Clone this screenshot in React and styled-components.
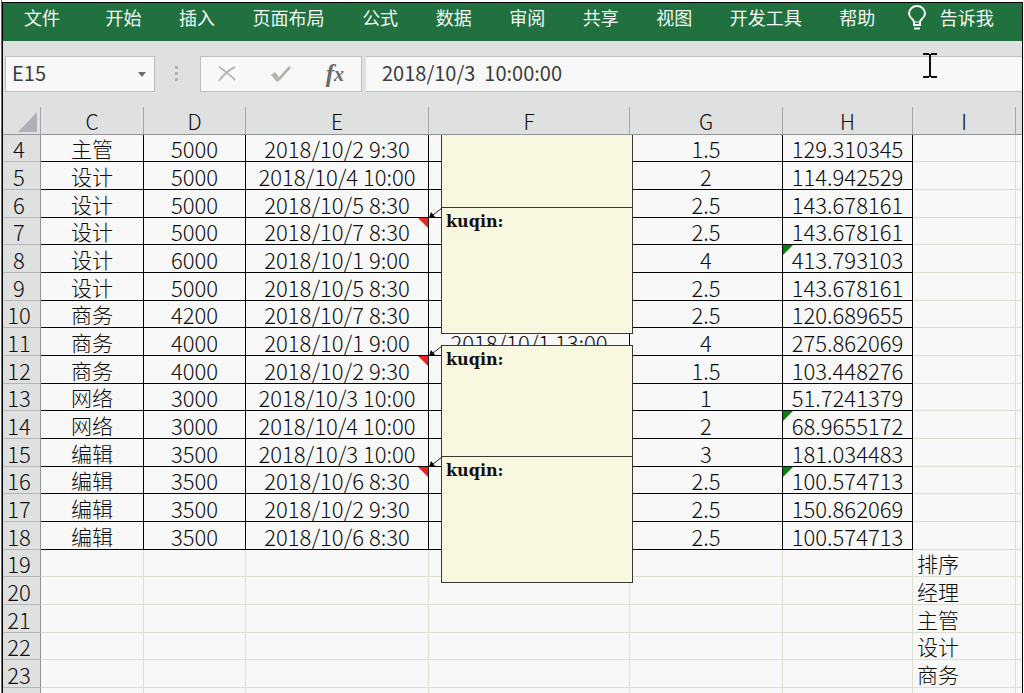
import styled, { createGlobalStyle } from "styled-components";

const GlobalStyle = createGlobalStyle`
    * {
        box-sizing: border-box;
    }
    body {
        margin: 0;
        background-color: #fff;
        font-family: "Noto Sans CJK SC", sans-serif;
    }
    button, input {
        font: inherit;
        color: inherit;
    }
`
const Window = styled.div`
    height: 100vh;
    overflow: hidden;
    padding: 2px 1px 0;
    background: linear-gradient(to right, #fff 1px, #3a78ad 1px, #3a78ad 2px, #fff 2px);
`
const Frame = styled.div`
    display: flex;
    flex-direction: column;
    min-height: 100%;
    margin-left: 1px;
    border: 1px solid #000;
    border-bottom: none;
    background-color: #dfe0e0;
`
const Ribbon = styled.nav`
    display: flex;
    align-items: center;
    justify-content: space-between;
    height: 38px;
    padding: 0 28px 10px 21px;
    background-color: #217140;
    color: #f4f8f4;
`
const Tab = styled.button`
    display: flex;
    align-items: center;
    gap: 14px;
    flex: none;
    padding: 0;
    border: none;
    background: none;
    font-size: 18px;
    line-height: 28px;
    cursor: pointer;

    &:first-child {
        margin-right: 8px;
    }

    &:last-child {
        margin-left: -5px;
    }
`
const FormulaBar = styled.div`
    display: flex;
    align-items: center;
    height: 66px;
    padding-left: 2px;
    color: #3c3c3c;
    font-size: 20px;
`
const NameBox = styled.div`
    display: flex;
    align-items: center;
    width: 150px;
    height: 36px;
    padding: 0 8px 0 6px;
    border: 1px solid #bdbebe;
    background-color: #f8f8f8;

    input {
        flex: 1;
        min-width: 0;
        height: 34px;
        padding: 0 0 4px;
        border: none;
        background: none;
        outline: none;
    }
`
const IconButton = styled.button`
    display: flex;
    align-items: center;
    justify-content: center;
    padding: 0;
    border: none;
    background: none;
    cursor: pointer;
`
const FunctionButton = styled(IconButton)`
    color: #6a6a6a;
    font: italic bold 25px/30px "Liberation Serif", serif;

    small {
        font-size: 20px;
    }
`
const Grip = styled.svg`
    margin: 0 21px 0 20px;
`
const Actions = styled.div`
    display: flex;
    align-items: center;
    justify-content: space-between;
    width: 162px;
    height: 36px;
    padding: 0 17px;
    border: 1px solid #bdbebe;
    background-color: #f8f8f8;
`
const FormulaInput = styled.input`
    flex: 1;
    min-width: 0;
    height: 36px;
    margin-left: 4px;
    padding: 0 16px 4px;
    border: 1px solid #bdbebe;
    border-width: 1px 0;
    background-color: #f8f8f8;
    outline: none;
    white-space: pre;
`
const SheetArea = styled.div`
    position: relative;
    flex: 1;
    background-color: #f8f8f8;
`
const Sheet = styled.table`
    width: 100%;
    table-layout: fixed;
    border-collapse: separate;
    border-spacing: 0;
    color: #0c0c0c;
    font-size: 22px;
    font-weight: 300;
    line-height: 26px;
`
const ColumnHead = styled.th`
    height: 28px;
    padding: 1px 0 0;
    border-right: 1px solid #a4a5a8;
    border-bottom: 1px solid #939496;
    background-color: #dfe0e0;
    font-size: 21px;
    font-weight: 300;

    &:last-child {
        border-right: none;
    }
`
const SelectAll = styled.svg`
    display: block;
    margin: 2px 0 0 15px;
`
const RowHead = styled.th`
    padding: 0 5px 0 0;
    border-right: 1px solid #939496;
    border-bottom: 1px solid #b4b5b8;
    background-color: #dfe0e0;
    font-weight: 300;
`
const Row = styled.tr`
    height: 28px;

    &:nth-child(3n + 1) {
        height: 27px;
    }
`
const Cell = styled.td`
    position: relative;
    padding: ${props => props.$left ? '0 4px' : '0'};
    border-right: 1px solid ${props => props.$boxed ? '#000' : '#dedfd3'};
    border-bottom: 1px solid ${props => props.$boxed ? '#000' : '#dedfd3'};
    font-size: ${props => props.$hanzi ? '21px' : '22px'};
    text-align: ${props => props.$left ? 'left' : 'center'};
    white-space: nowrap;

    &:last-child {
        border-right: none;
    }
`
const NoteMark = styled.span`
    position: absolute;
    top: 0;
    right: 0;
    border-top: 10px solid #e8261f;
    border-left: 10px solid transparent;
`
const ErrorMark = styled.span`
    position: absolute;
    top: 0;
    left: 0;
    border-top: 10px solid #0b7d12;
    border-right: 10px solid transparent;
`
const Note = styled.aside`
    position: absolute;
    top: ${props => props.$top}px;
    left: 438px;
    width: 192px;
    height: 127px;
    padding: 3px 4px;
    border: 1px solid #3a3a34;
    border-top-width: ${props => props.$cut ? '0' : '1px'};
    background-color: #f8f7e0;
    color: #111;
    font: bold 16px/22px "DejaVu Serif", serif;
`
const Arrow = styled.svg`
    position: absolute;
    top: 0;
    left: -13px;
    overflow: visible;
`
const Pointer = styled.svg`
    position: fixed;
    top: 53px;
    left: 923px;
    pointer-events: none;
`

const tabs = ['文件', '开始', '插入', '页面布局', '公式', '数据', '审阅', '共享', '视图', '开发工具', '帮助']

const columns = [
    { name: 'C', width: 103 },
    { name: 'D', width: 102 },
    { name: 'E', width: 183 },
    { name: 'F', width: 201 },
    { name: 'G', width: 153 },
    { name: 'H', width: 130 },
    { name: 'I', width: 103 }
]

const rows = [
    { id: 4, cells: ['主管', '5000', '2018/10/2 9:30', '', '1.5', '129.310345'] },
    { id: 5, cells: ['设计', '5000', '2018/10/4 10:00', '', '2', '114.942529'] },
    { id: 6, cells: ['设计', '5000', '2018/10/5 8:30', '', '2.5', '143.678161'] },
    { id: 7, cells: ['设计', '5000', '2018/10/7 8:30', '', '2.5', '143.678161'], note: true },
    { id: 8, cells: ['设计', '6000', '2018/10/1 9:00', '', '4', '413.793103'], error: true },
    { id: 9, cells: ['设计', '5000', '2018/10/5 8:30', '', '2.5', '143.678161'] },
    { id: 10, cells: ['商务', '4200', '2018/10/7 8:30', '', '2.5', '120.689655'] },
    { id: 11, cells: ['商务', '4000', '2018/10/1 9:00', '2018/10/1 13:00', '4', '275.862069'] },
    { id: 12, cells: ['商务', '4000', '2018/10/2 9:30', '', '1.5', '103.448276'], note: true },
    { id: 13, cells: ['网络', '3000', '2018/10/3 10:00', '', '1', '51.7241379'] },
    { id: 14, cells: ['网络', '3000', '2018/10/4 10:00', '', '2', '68.9655172'], error: true },
    { id: 15, cells: ['编辑', '3500', '2018/10/3 10:00', '', '3', '181.034483'] },
    { id: 16, cells: ['编辑', '3500', '2018/10/6 8:30', '', '2.5', '100.574713'], note: true, error: true },
    { id: 17, cells: ['编辑', '3500', '2018/10/2 9:30', '', '2.5', '150.862069'] },
    { id: 18, cells: ['编辑', '3500', '2018/10/6 8:30', '', '2.5', '100.574713'] },
    { id: 19, extra: '排序' },
    { id: 20, extra: '经理' },
    { id: 21, extra: '主管' },
    { id: 22, extra: '设计' },
    { id: 23, extra: '商务' },
    { id: '' }
]

const notes = [
    { top: 28, cut: true },
    { top: 100, author: 'kuqin:' },
    { top: 238, author: 'kuqin:' },
    { top: 349, author: 'kuqin:' }
]

function SheetRow({ row }) {
    return (
        <Row>
            <RowHead scope="row">{row.id}</RowHead>
            {columns.slice(0, 6).map((column, i) => (
                <Cell key={column.name} $boxed={Boolean(row.cells)} $hanzi={column.name === 'C'}>
                    {row.cells && row.cells[i]}
                    {row.note && column.name === 'E' && <NoteMark />}
                    {row.error && column.name === 'H' && <ErrorMark />}
                </Cell>
            ))}
            <Cell $left $hanzi>{row.extra}</Cell>
            <Cell />
        </Row>
    );
}

function App() {
    return (
        <Window>
            <GlobalStyle />
            <Frame>
                <Ribbon>
                    {tabs.map(tab => <Tab key={tab}>{tab}</Tab>)}
                    <Tab>
                        <svg width="18" height="28" viewBox="0 0 18 28" fill="none" stroke="currentColor" strokeWidth="2">
                            <path d="M6 22v-3c0-3-5-4-5-8.500a8 7.500 0 0 1 16 0c0 4.500-5 5.500-5 8.500v3z" />
                            <path d="M6 19h6" strokeWidth="1" />
                            <path d="M6 25.500h6" />
                        </svg>
                        告诉我
                    </Tab>
                </Ribbon>
                <FormulaBar>
                    <NameBox>
                        <input aria-label="名称框" defaultValue="E15" />
                        <IconButton aria-label="展开名称框">
                            <svg width="8" height="5" viewBox="0 0 8 5"><path d="M0 0h8L4 5z" fill="#6d6e70" /></svg>
                        </IconButton>
                    </NameBox>
                    <Grip width="4" height="16" viewBox="0 0 4 16" fill="#b2b3b8">
                        <path d="M0 0h3v3H0zM0 6h3v3H0zM0 12h3v3H0z" />
                    </Grip>
                    <Actions>
                        <IconButton aria-label="取消">
                            <svg width="18" height="18" viewBox="0 0 18 18" fill="none" stroke="#b9b9b6" strokeWidth="2">
                                <path d="M1 2c5 3 11 8 16 13M17 2C11 5 5 10 1 16" />
                            </svg>
                        </IconButton>
                        <IconButton aria-label="输入">
                            <svg width="20" height="18" viewBox="0 0 20 18" fill="#b5b5b0">
                                <path d="M0 10l4-3 4 5L18 1l2 2L9 15l-3 2z" />
                            </svg>
                        </IconButton>
                        <FunctionButton aria-label="插入函数">f<small>x</small></FunctionButton>
                    </Actions>
                    <FormulaInput aria-label="编辑栏" defaultValue="2018/10/3  10:00:00" />
                </FormulaBar>
                <SheetArea>
                    <Sheet>
                        <colgroup>
                            <col width="38" />
                            {columns.map(column => <col key={column.name} width={column.width} />)}
                            <col />
                        </colgroup>
                        <thead>
                            <tr>
                                <ColumnHead aria-label="全选">
                                    <SelectAll width="19" height="20" viewBox="0 0 19 20">
                                        <path d="M19 0v20H0z" fill="#b0b0b8" />
                                    </SelectAll>
                                </ColumnHead>
                                {columns.map(column => (
                                    <ColumnHead key={column.name} scope="col">{column.name}</ColumnHead>
                                ))}
                                <ColumnHead />
                            </tr>
                        </thead>
                        <tbody>
                            {rows.map((row, i) => <SheetRow key={i} row={row} />)}
                        </tbody>
                    </Sheet>
                    {notes.map(note => (
                        <Note key={note.top} $top={note.top} $cut={note.cut}>
                            {note.author}
                            {note.author && (
                                <Arrow width="14" height="12" viewBox="0 0 14 12">
                                    <path d="M13 0L4 7" stroke="#222" fill="none" />
                                    <path d="M0 10l2-6 4 5z" fill="#000" />
                                </Arrow>
                            )}
                        </Note>
                    ))}
                </SheetArea>
            </Frame>
            <Pointer width="14" height="25" viewBox="0 0 14 25" stroke="#111" fill="none">
                <path d="M0 1h6M8 1h6M0 24h6M8 24h6" strokeWidth="2" />
                <path d="M7 1v23" strokeWidth="2" />
            </Pointer>
        </Window>
    );
}

export default App;
